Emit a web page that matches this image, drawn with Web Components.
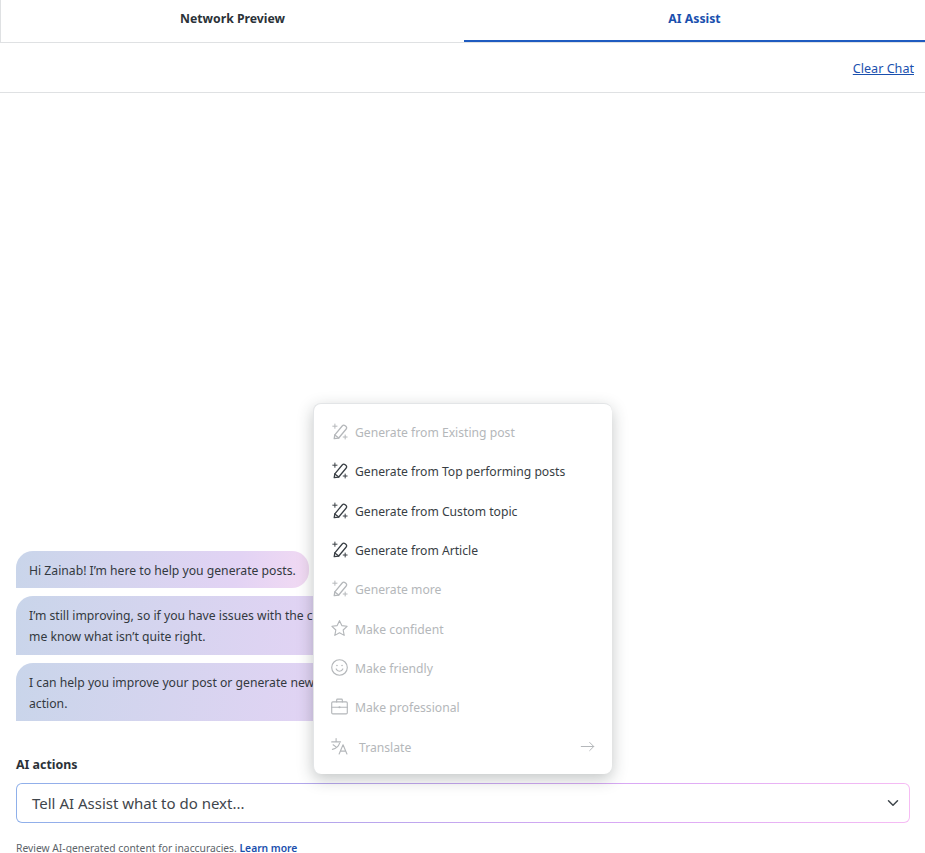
<!DOCTYPE html>
<html lang="en">
<head>
<meta charset="utf-8">
<title>AI Assist</title>
<style>
  html, body { margin: 0; height: 853px; overflow: hidden; background: #fff; }
  body { font-family: "Noto Sans", "Open Sans", sans-serif; color: #2b3238; }
</style>
</head>
<body>
<assist-panel>
  <tab-bar slot="tabs">
    <tab-item>Network Preview</tab-item>
    <tab-item active>AI Assist</tab-item>
  </tab-bar>
  <chat-toolbar slot="toolbar">Clear Chat</chat-toolbar>
  <chat-bubble slot="chat">Hi Zainab! I’m here to help you generate posts.</chat-bubble>
  <chat-bubble slot="chat">I’m still improving, so if you have issues with the content, please let<br>me know what isn’t quite right.</chat-bubble>
  <chat-bubble slot="chat">I can help you improve your post or generate new content. Select an<br>action.</chat-bubble>
  <ai-prompt slot="prompt" label="AI actions" placeholder="Tell AI Assist what to do next..."></ai-prompt>
  <ai-menu slot="overlay">
    <menu-row icon="magic" disabled>Generate from Existing post</menu-row>
    <menu-row icon="magic">Generate from Top performing posts</menu-row>
    <menu-row icon="magic">Generate from Custom topic</menu-row>
    <menu-row icon="magic">Generate from Article</menu-row>
    <menu-row icon="magic" disabled>Generate more</menu-row>
    <menu-row icon="star" disabled>Make confident</menu-row>
    <menu-row icon="smile" disabled>Make friendly</menu-row>
    <menu-row icon="case" disabled>Make professional</menu-row>
    <menu-row icon="translate" disabled arrow>Translate</menu-row>
  </ai-menu>
</assist-panel>

<script>
const ICONS = {
  magic: '<g stroke-width="1.8"><path d="M4.500 22.200l.9-5.400L15.800 4.200a3 3 0 0 1 4.200-.4l.9.8a3 3 0 0 1 .3 4.200L10.900 21.200z"/><path d="M5.400 16.800l5.500 4.400"/></g><path d="M5.500 1.500v6M2.500 4.500h6M20 17v5.600M17.200 19.800h5.600" stroke-width="1.400"/>',
  star: '<path d="M12 .9l3.300 7 7.400 1-5.500 5.200 1.400 7.600-6.600-3.700-6.600 3.700 1.400-7.600L1.300 8.900l7.400-1z"/>',
  smile: '<circle cx="12" cy="12" r="11"/><path d="M7.300 14c1 2.200 2.800 3.300 4.700 3.300s3.700-1.100 4.700-3.300"/><circle cx="8.400" cy="9.300" r="1.100" fill="currentColor" stroke="none"/><circle cx="15.600" cy="9.300" r="1.100" fill="currentColor" stroke="none"/>',
  case: '<rect x="1" y="5.500" width="22" height="17" rx="1.600"/><path d="M8 5.500V2.700C8 2 8.500 1.500 9.200 1.500h5.600c.7 0 1.200.5 1.200 1.200v2.800M1 13h22"/><circle cx="12" cy="13" r="1.500" fill="currentColor" stroke="none"/>',
  translate: '<path d="M1 5.500h12.500M7.200 .8v4.700M3 9.500l4 3M12 7.500c-1.200 4-4 7-10 8.500"/><path d="M11.500 22.500L17 9.500l5.500 13M13.300 18.500h7.400"/>',
  arrow: '<path d="M2 12h20M15.500 5.500L22 12l-6.500 6.500"/>'
}

function svgIcon (name, size) {
  return `<svg viewBox="0 0 24 24" width="${size}" height="${size}" fill="none" stroke="currentColor" stroke-width="1.6" stroke-linecap="round" stroke-linejoin="round" aria-hidden="true">${ICONS[name]}</svg>`
}

const define = (name, html, extra) => {
  const template = document.createElement('template')
  template.innerHTML = html
  extra.template = template
  customElements.define(name, extra)
}

class Base extends HTMLElement {
  constructor () {
    super()
    this.attachShadow({ mode: 'open' })
      .appendChild(this.constructor.template.content.cloneNode(true))
  }
}

define('assist-panel', `
  <style>
    :host { display: flex; flex-direction: column; position: relative; height: 853px; overflow: hidden; }
    #chat { flex: 1; min-height: 0; display: flex; flex-direction: column; justify-content: flex-end; align-items: flex-start; gap: 8px; padding: 0 16px; }
    #prompt { flex: none; }
  </style>
  <slot name="tabs"></slot>
  <slot name="toolbar"></slot>
  <div id="chat"><slot name="chat"></slot></div>
  <div id="prompt"><slot name="prompt"></slot></div>
  <slot name="overlay"></slot>
`, class extends Base {})

define('tab-bar', `
  <style>
    :host { display: grid; grid-template-columns: 463px 1fr; height: 43px; box-sizing: border-box; border-bottom: 1px solid #dfe1e3; border-left: 1px solid #dfe1e3; }
  </style>
  <slot></slot>
`, class extends Base {})

define('tab-item', `
  <style>
    :host { display: flex; align-items: center; justify-content: center; height: 42px; box-sizing: border-box; padding-bottom: 5px; font-size: 12.25px; font-weight: 700; color: #2b3238; }
    :host([active]) { color: #1a50ae; border-bottom: 2px solid #1f5bc0; padding-bottom: 3px; }
  </style>
  <slot></slot>
`, class extends Base {})

define('chat-toolbar', `
  <style>
    :host { display: flex; justify-content: flex-end; align-items: center; height: 50px; box-sizing: border-box; border-bottom: 1px solid #dfe1e3; padding: 2px 11px 0 0; }
    a { font-size: 12.6px; color: #1a50ae; text-decoration: underline; }
  </style>
  <a href="#"><slot></slot></a>
`, class extends Base {})

define('chat-bubble', `
  <style>
    :host { display: block; width: fit-content; box-sizing: border-box; padding: 9px 13px 7px; font-size: 12.2px; line-height: 21.2px; color: #33393f; white-space: nowrap; border-radius: 17px 17px 17px 0; background: linear-gradient(100deg, #c9d5ea 0%, #e2d3f4 75%, #f2daf3 100%); }
  </style>
  <slot></slot>
`, class extends Base {})

define('ai-prompt', `
  <style>
    :host { display: block; padding: 36px 15px 0 16px; height: 132px; box-sizing: border-box; }
    #label { font-size: 12.4px; font-weight: 700; line-height: 16px; color: #2b3238; }
    #frame { margin-top: 10px; height: 40px; box-sizing: border-box; padding: 1px; border-radius: 6px; background: linear-gradient(90deg, #8fb0ea 0%, #b5a6ec 35%, #dba9f5 70%, #f6bcf4 100%); }
    #field { height: 100%; border-radius: 5px; background: #fff; display: flex; align-items: center; justify-content: space-between; padding: 0 10px 0 15px; box-sizing: border-box; font-size: 15px; color: #3f464c; }
    svg { display: block; color: #3f464c; }
    #note { margin-top: 17px; font-size: 10.3px; line-height: 16px; color: #5c6369; white-space: nowrap; }
    #note a { color: #1a50ae; font-weight: 600; text-decoration: none; }
  </style>
  <div id="label"></div>
  <div id="frame"><div id="field"><span id="text"></span>
    <svg width="12" height="12" viewBox="0 0 12 12" fill="none" stroke="currentColor" stroke-width="1.5" stroke-linecap="round" stroke-linejoin="round"><path d="M1.500 3.800L6 8.300l4.500-4.500"/></svg>
  </div></div>
  <div id="note">Review AI-generated content for inaccuracies. <a href="#">Learn more</a></div>
`, class extends Base {
  connectedCallback () {
    this.shadowRoot.querySelector('#label').textContent = this.getAttribute('label')
    this.shadowRoot.querySelector('#text').textContent = this.getAttribute('placeholder')
  }
})

define('ai-menu', `
  <style>
    :host { display: block; position: absolute; left: 313px; top: 403px; width: 299px; height: 371px; box-sizing: border-box; padding: 9px 0; background: #fff; border-radius: 8px; border: 1px solid #e3e5e7; border-width: 1px 0 0 1px; box-shadow: 0 5px 16px rgba(40, 50, 50, .28); }
  </style>
  <slot></slot>
`, class extends Base {})

define('menu-row', `
  <style>
    :host { display: flex; align-items: center; height: 39.3px; padding: 0 17px 0 17px; font-size: 12.17px; color: #383e44; }
    :host([disabled]) { color: #b4b7ba; }
    #icon { display: flex; width: 17px; height: 17px; margin: -1px 7px 1px 0; flex: none; }
    #icon.wide { margin-right: 11px; }
    #end { margin: -1px 0 1px auto; display: flex; }
    svg { display: block; }
  </style>
  <span id="icon"></span><slot></slot><span id="end"></span>
`, class extends Base {
  connectedCallback () {
    const name = this.getAttribute('icon')
    const icon = this.shadowRoot.querySelector('#icon')
    icon.innerHTML = svgIcon(name, 17)
    if (name === 'translate') icon.classList.add('wide')
    if (this.hasAttribute('arrow')) this.shadowRoot.querySelector('#end').innerHTML = svgIcon('arrow', 15)
  }
})
</script>
</body>
</html>
